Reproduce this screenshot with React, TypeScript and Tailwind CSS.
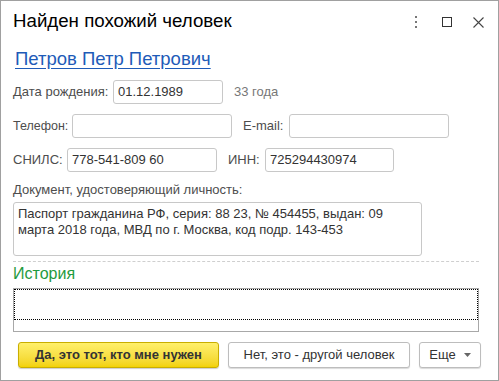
import React from "react";

const font = { fontFamily: '"Liberation Sans", Arial, sans-serif' };

const Field = ({ value, className }: { value?: string; className: string }) => (
  <div
    className={`h-[24px] border border-[#c8c8c8] rounded-[3px] bg-white flex items-center px-[4px] text-[13px] text-[#333] ${className}`}
  >
    {value}
  </div>
);

const App = (): JSX.Element => {
  return (
    <div
      style={font}
      className="w-[499px] h-[381px] bg-white border border-[#a0a0a0] flex flex-col text-[#4d4d4d]"
    >
      <div className="h-[40px] flex items-center justify-between pl-[12px] pr-[14px]">
        <h1 className="text-[18.7px] text-black pt-[1px]">Найден похожий человек</h1>
        <div className="flex items-center gap-[21px] pt-[2px]">
          <svg width="4" height="12" viewBox="0 0 4 12">
            <rect x="1" y="0" width="2" height="2" fill="#777" />
            <rect x="1" y="5" width="2" height="2" fill="#777" />
            <rect x="1" y="10" width="2" height="2" fill="#777" />
          </svg>
          <svg width="10" height="10" viewBox="0 0 10 10" className="ml-[3px]">
            <rect x="0.5" y="0.5" width="9" height="9" fill="none" stroke="#333" />
          </svg>
          <svg width="11" height="11" viewBox="0 0 11 11">
            <path d="M0.5 0.5 L10.5 10.5 M10.5 0.5 L0.5 10.5" stroke="#444" strokeWidth="1.1" />
          </svg>
        </div>
      </div>

      <div className="mt-[8px] pl-[14px] h-[20px] flex items-center">
        <span className="text-[18.5px] text-[#1e5bb8] underline underline-offset-[3px]">
          Петров Петр Петрович
        </span>
      </div>

      <div className="mt-[11px] pl-[12px] flex items-center text-[13px]">
        <span className="w-[100px]">Дата рождения:</span>
        <Field value="01.12.1989" className="w-[110px]" />
        <span className="ml-[11px] text-[#777]">33 года</span>
      </div>

      <div className="mt-[10px] pl-[12px] flex items-center text-[13px]">
        <span className="w-[59px] text-[12.5px]">Телефон:</span>
        <Field className="w-[160px]" />
        <span className="ml-[11px] w-[46px]">E-mail:</span>
        <Field className="w-[160px]" />
      </div>

      <div className="mt-[10px] pl-[12px] flex items-center text-[13px]">
        <span className="w-[54px]">СНИЛС:</span>
        <Field value="778-541-809 60" className="w-[150px]" />
        <span className="ml-[11px] w-[37px]">ИНН:</span>
        <Field value="725294430974" className="w-[129px]" />
      </div>

      <div className="mt-[10px] pl-[12px] h-[16px] flex items-center text-[13px]">
        Документ, удостоверяющий личность:
      </div>

      <div className="mt-[4px] ml-[12px] w-[409px] h-[54px] border border-[#c8c8c8] rounded-[3px] px-[4px] pt-[3px] text-[13px] leading-[16px] text-[#333]">
        Паспорт гражданина РФ, серия: 88 23, № 454455, выдан: 09 марта 2018 года, МВД по г. Москва, код подр. 143-453
      </div>

      <div className="mt-[5px] ml-[12px] w-[466px] border-t border-dashed border-[#cfcfcf]" />

      <div className="mt-[3px] pl-[12px] h-[18px] flex items-center text-[16px] text-[#1f9a3e]">
        История
      </div>

      <div className="mt-[5px] ml-[12px] w-[466px] h-[44px] border border-[#a8a8a8] bg-white">
        <div className="h-[31px] border border-dotted border-black" />
      </div>

      <div className="mt-[10px] pl-[17px] flex items-center text-[13px]">
        <button className="w-[201px] h-[26px] rounded-[3px] border border-[#c9ae00] bg-gradient-to-b from-[#fff06a] to-[#f2d200] font-bold text-[#333] shadow-[0_1px_1px_rgba(0,0,0,0.2)]">
          Да, это тот, кто мне нужен
        </button>
        <button className="ml-[9px] w-[182px] h-[26px] rounded-[3px] border border-[#bdbdbd] bg-white text-[#333] shadow-[0_1px_1px_rgba(0,0,0,0.15)]">
          Нет, это - другой человек
        </button>
        <button className="ml-[9px] w-[62px] h-[26px] rounded-[3px] border border-[#bdbdbd] bg-white text-[#333] flex items-center justify-center gap-[8px] shadow-[0_1px_1px_rgba(0,0,0,0.15)]">
          Еще
          <svg width="7" height="4" viewBox="0 0 7 4">
            <path d="M0 0 L7 0 L3.5 4 Z" fill="#666" />
          </svg>
        </button>
      </div>
    </div>
  );
};

export default App;
